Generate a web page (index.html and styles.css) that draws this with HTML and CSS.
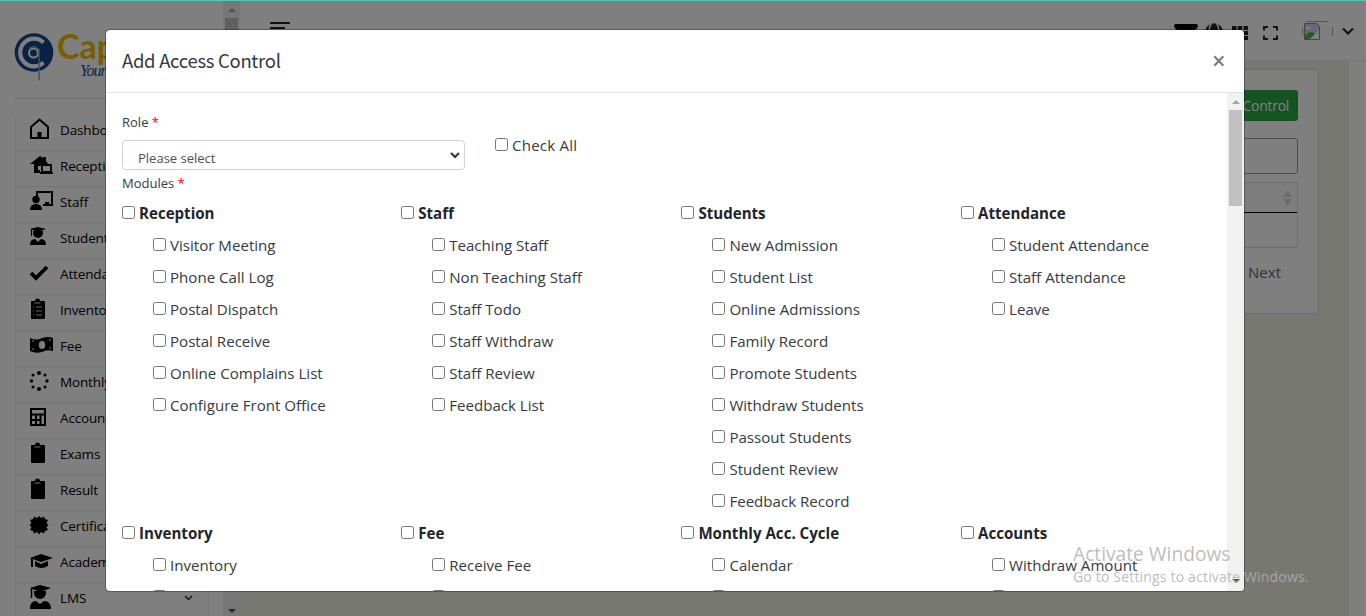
FILE: index.html
```
<!DOCTYPE html>
<html lang="en">
<head>
<meta charset="utf-8">
<title>Add Access Control</title>
<link rel="stylesheet" href="styles.css">
</head>
<body>
<div class="app">
  <aside class="sidebar">
    <div class="side-main">
      <div class="brand">
        <svg class="brand-mark" width="42" height="52" viewBox="0 0 42 52"><circle cx="20" cy="22.500" r="19.300" fill="#17428a"/><path d="M29.500 12.500a13.800 13.800 0 1 0 0 20" fill="none" stroke="#fff" stroke-width="4.200"/><circle cx="19.500" cy="23" r="4.500" fill="none" stroke="#fff" stroke-width="2"/><path d="M15 18.500l5-2 5 3v31" fill="none" stroke="#88a2cc" stroke-width="1.500"/></svg>
        <div class="brand-text"><span class="brand-name">Capital</span><span class="brand-tag">Your School</span></div>
      </div>
      <ul class="menu" id="menu"></ul>
    </div>
    <div class="side-scroll"><i class="tri up"></i><i class="side-thumb"></i><i class="tri down dark"></i></div>
  </aside>
  <div class="main">
    <header class="navbar">
      <div class="burger"><i></i><i class="short"></i><i></i></div>
      <div class="nav-icons">
        <svg width="24" height="18" viewBox="0 0 24 18"><path d="M2 0h20q2 0 2 2 0 2-3 4l-6 5H9L3 6Q0 4 0 2 0 0 2 0z"/></svg>
        <svg width="18" height="18" viewBox="0 0 18 18"><circle cx="9" cy="9" r="8.800" fill="#222"/><path d="M6.500 0q-2.500 4-2.500 9M11.500 0q2.500 4 2.500 9" fill="none" stroke="#fff" stroke-width="1.500"/></svg>
        <svg width="16" height="14" viewBox="0 0 16 14" fill="#222"><path d="M0 0h4.500v4H0zM5.700 0h4.500v4H5.700zM11.500 0H16v4h-4.500zM0 5h4.500v4H0zM5.700 5h4.500v4H5.700zM11.500 5H16v4h-4.500zM0 10h4.500v4H0zM5.700 10h4.500v4H5.700zM11.500 10H16v4h-4.500z"/></svg>
        <svg width="15" height="14" viewBox="0 0 15 14" fill="none" stroke="#222" stroke-width="2"><path d="M1 4.500V1h4M10 1h4v3.500M14 9.500V13h-4M5 13H1V9.500"/></svg>
        <svg class="avatar" width="31" height="20" viewBox="0 0 31 20"><path d="M4 .5h22M.5 6v8M30.500 6v9" stroke="#aaa" fill="none"/><path d="M2.500 2.500h12l3 3v13h-15z" fill="#c5d5f5" stroke="#888"/><path d="M3 18v-3q5-7 10-2l-5 5z" fill="#5ab04a"/><path d="M8 18l9-9v9z" fill="#fff"/><path d="M4 8q1-3 3-2 2 0 2 2z" fill="#fff"/></svg>
        <svg width="12" height="9" viewBox="0 0 12 9"><path d="M1 1.500l5 5 5-5" fill="none" stroke="#222" stroke-width="2.200"/></svg>
      </div>
    </header>
    <div class="content">
      <section class="card">
        <button class="add-btn">Add Access Control</button>
        <div class="search"></div>
        <div class="table"><div class="thead"><svg width="9" height="16" viewBox="0 0 9 16"><path d="M0 7l4.500-7L9 7zM0 9h9l-4.500 7z" fill="#d6d6d6"/></svg></div><div class="trow"></div></div>
        <div class="next">Next</div>
      </section>
    </div>
  </div>
</div>
<div class="backdrop"></div>
<div class="topline"></div>
<div class="modal">
  <div class="modal-head"><h5>Add Access Control</h5><svg width="12" height="12" viewBox="0 0 12 12"><path d="M1.300 1.300l9 9.400M10.300 1.300l-9 9.400" stroke="#808080" stroke-width="2.300"/></svg></div>
  <div class="modal-body">
    <form class="form">
      <div class="top-row">
        <div class="role"><label>Role <b>*</b></label><div class="select"><span>Please select</span><svg width="10" height="7" viewBox="0 0 10 7"><path d="M1 1l4 4 4-4" fill="none" stroke="#343a40" stroke-width="2.200"/></svg></div></div>
        <label class="check all"><input type="checkbox"><span>Check All</span></label>
      </div>
      <label class="modules-label">Modules <b>*</b></label>
      <div class="modules" id="modules"></div>
    </form>
    <div class="scroll"><i class="tri up"></i><i class="thumb"></i><i class="tri down dark"></i></div>
  </div>
</div>
<div class="watermark"><div class="wm-title">Activate Windows</div><div class="wm-sub">Go to Settings to activate Windows.</div></div>
<script src="app.js"></script>
</body>
</html>
```
FILE: styles.css
```
* { box-sizing: border-box; }
body { margin: 0; width: 1366px; height: 616px; overflow: hidden; background: #fff; font-family: "Open Sans", "Noto Sans", sans-serif; color: #212529; }
.app { display: flex; height: 616px; }
.sidebar { display: flex; width: 240px; background: #fff; }
.side-main { width: 223px; padding: 30px 14px 0 15px; overflow: hidden; }
.brand { display: flex; height: 69px; border-bottom: 1px solid #dedede; }
.brand-mark { flex: none; margin-left: -1px; }
.brand-text { display: flex; flex-direction: column; padding-left: 1px; white-space: nowrap; }
.brand-name { font: 700 34px/32px Lato, sans-serif; color: #f2bd00; }
.brand-tag { font: italic 16px/17px "Liberation Serif", serif; color: #1d4f9c; padding-left: 23px; letter-spacing: -1px; }
.menu { list-style: none; margin: 16px 0 0; padding: 0; border: 1px solid #f0f0f0; border-top: 0; }
.menu li { display: flex; align-items: center; height: 36px; border-bottom: 1px solid #e8e8e8; padding: 0 0 5px 14px; font-size: 13.5px; color: #000; letter-spacing: -.15px; }
.menu svg { width: 24px; height: 24px; margin: -2px 6px 0 0; flex: none; overflow: visible; }
.menu .chev { width: 9px; height: 6px; margin: 0 15px 0 auto; }
.side-scroll, .scroll { display: flex; flex-direction: column; align-items: center; width: 17px; background: #f1f1f1; }
.side-thumb { width: 13px; height: 60px; margin-top: 6px; background: #c1c1c1; }
.tri { width: 0; height: 0; border: 4px solid transparent; border-top-width: 0; border-bottom: 4px solid #a3a3a3; }
.side-scroll .up { margin-top: 8px; }
.down { margin: auto 0 3px; transform: rotate(180deg); border-bottom-color: #505050; }
.main { flex: 1; }
.navbar { display: flex; justify-content: space-between; height: 61px; padding: 22px 11px 0 30px; border-bottom: 1px solid #eee; background: #fff; }
.burger { display: flex; flex-direction: column; gap: 3px; }
.burger i { width: 20px; height: 2px; background: #222; }
.burger .short { width: 15px; }
.nav-icons { display: flex; align-items: flex-start; }
.nav-icons svg { margin-top: 1px; }
.nav-icons svg:nth-child(1) { margin-top: 2px; }
.nav-icons svg:nth-child(2) { margin-left: 7px; }
.nav-icons svg:nth-child(3) { margin: 4px 0 0 9px; }
.nav-icons svg:nth-child(4) { margin: 4px 0 0 15px; }
.nav-icons .avatar { margin: -1px 0 0 24px; }
.nav-icons svg:last-child { margin: 5px 1px 0 9px; }
.content { width: 1109px; height: 555px; padding: 8px 30px 0 15px; background: #f0f0e4; }
.card { display: flex; flex-direction: column; height: 245px; padding: 20px 20px 0; border: 1px solid #dcdcdc; border-radius: 4px; background: #fff; }
.add-btn { align-self: flex-end; width: 158px; height: 31px; padding: 0 9px; border: 0; border-radius: 3px; background: #28a745; color: #fff; font: 14px "Open Sans", sans-serif; text-align: right; letter-spacing: -.3px; }
.search { height: 36px; margin-top: 17px; border: 1px solid #999; border-radius: 3px; }
.table { margin-top: 8px; border: 1px solid #dedede; }
.thead { display: flex; height: 30px; justify-content: flex-end; align-items: center; padding-right: 5px; border-bottom: 1px solid #000; background: #fafafa; }
.trow { height: 34px; }
.next { margin-top: 14px; padding-right: 17px; text-align: right; font-size: 15px; line-height: 20px; color: #666; }
.backdrop { position: absolute; inset: 0; background: rgba(0, 0, 0, .5); }
.topline { position: absolute; left: 0; top: 0; width: 1366px; height: 1px; background: #49c5c5; }
.modal { position: absolute; left: 105px; top: 29px; width: 1140px; height: 563px; border: 1px solid rgba(0, 0, 0, .3); border-radius: 5px; background: #fff; background-clip: padding-box; overflow: hidden; }
.modal-head { display: flex; justify-content: space-between; align-items: center; height: 63px; padding: 0 19px 0 16px; border-bottom: 1px solid #dee2e6; }
.modal-head h5 { margin: 0; padding-bottom: 3px; font: 400 18.500px "Noto Sans CJK SC", sans-serif; letter-spacing: -.3px; color: #343a40; }
.modal-body { display: flex; height: 498px; }
.form { flex: 1; padding: 19px 0 0 16px; overflow: hidden; }
.scroll .up { margin-top: 7px; }
.thumb { width: 13px; height: 96px; margin-top: 6px; background: #c1c1c1; }
.scroll .down { margin-bottom: 8px; }
.top-row { display: flex; }
.role { width: 343px; }
.role label, .modules-label { display: block; font-size: 13px; line-height: 20px; color: #343a40; }
.form b { font-weight: 400; color: #f00; }
.select { display: flex; justify-content: space-between; align-items: center; height: 30px; margin-top: 8px; padding: 0 4px 0 15px; border: 1px solid #ced4da; border-radius: 4px; font-size: 13px; color: #495057; }
.select span { padding-top: 5px; }
.modules-label { margin-top: 3px; }
.modules { display: grid; grid-template-columns: repeat(4, 279.700px); grid-auto-rows: 320px; margin-top: 4px; }
.modules > div:nth-child(4n+2) { margin-left: -.5px; }
.check { display: flex; height: 32px; align-items: center; font-size: 15.100px; white-space: nowrap; color: #343a40; }
.check input { width: 13px; height: 13px; margin: -2px 4px 0 0; }
.check.head { font-weight: 700; color: #212529; }
.check.sub { padding-left: 31px; }
.check.all { margin: 17px 0 0 30px; letter-spacing: .2px; }
.watermark { position: absolute; left: 1073px; top: 541px; color: rgba(176, 176, 176, .85); white-space: nowrap; }
.wm-title { font-size: 19.200px; line-height: 26px; }
.wm-sub { font-size: 14px; line-height: 20px; letter-spacing: .18px; }
```
FILE: app.js
```
const clip = '<path d="M4 4h4a2.500 2.500 0 0 1 5 0h4q1 0 1 1v16q0 1-1 1H5q-1 0-1-1z"/><path d="M7.500 6h6" stroke="#ddd"/>';
const icons = {
  home: '<path d="M4 10l8.500-7.500L21 10v11H4z" fill="none" stroke="#000" stroke-width="2"/><path d="M10.500 15h4v6h-4z"/>',
  reception: '<path d="M3 11l10-8 3 2V4h3v4l2 3h-5l-3 2h-2v4h2v3H7v-9z"/><path d="M15 12h9v7h-9z" fill="#fff" stroke="#000" stroke-width="1.800"/><path d="M13 20h13" stroke="#000" stroke-width="2"/>',
  staff: '<path d="M10 7V3h15v13h-9" fill="none" stroke="#000" stroke-width="2"/><circle cx="9" cy="10.500" r="3.700"/><path d="M3 21q0-6 6-6t6 6zM18 13h4v3h-4z"/>',
  student: '<path d="M3 4l8-2 8 2-8 3zM6 6h10v2a5 5 0 0 1-10 0zM3 20q0-6 5-6l3 3 3-3q5 0 5 6z"/><path d="M4.500 4v7" stroke="#000"/>',
  check: '<path d="M4 12l5 5L20 6" fill="none" stroke="#000" stroke-width="3.800"/>',
  list: clip + '<path d="M6 10h1M9 10h6M6 14h1M9 14h6M6 18h1M9 18h6" stroke="#ccc"/>',
  money: '<path d="M3 5q6 3 12 0 6-2 11 0v13q-6-2-11 1-6 2-12-1z"/><ellipse cx="15" cy="12" rx="3.200" ry="4" fill="#fff"/><path d="M5 8h2M22 7h2M5 16h2M22 15h2" stroke="#fff"/>',
  spin: '<circle cx="12" cy="4" r="2"/><circle cx="18" cy="6" r="1.500"/><circle cx="20" cy="12" r="1.700"/><circle cx="18" cy="18" r="1.500"/><circle cx="12" cy="20" r="2"/><circle cx="6" cy="18" r="1.500"/><circle cx="4.500" cy="12" r="1.700"/><circle cx="6" cy="6" r="1.500"/>',
  calc: '<path d="M4 4h14v16H4zM4 9.500h14M4 15h10M9 10v10M13.500 10v10" fill="none" stroke="#000" stroke-width="2"/>',
  clip,
  cert: '<polygon points="12,3 14,5 17,3.500 18,6 21,7 19.500,10 21.500,12 19.500,14 21,17 18,18 17,20.500 14,19 12,21.500 10,19 7,20.500 6,18 3,17 4.500,14 2.500,12 4.500,10 3,7 6,6 7,3.500 10,5"/>',
  cap: '<path d="M3 9l11-4 12 4-12 4zM8 12l6 3 7-3v5q-7 4-13 0z"/><path d="M5 9v9" stroke="#000" stroke-width="2"/>',
  lms: '<path d="M3 3l10-3 11 3-11 4zM7 6h12v2a6 6 0 0 1-12 0zM3 24q0-8 6-8l4 3 4-3q7 0 7 8z"/><path d="M4.500 3v10" stroke="#000" stroke-width="1.500"/>'
};
const menu = [["home", "Dashboard"], ["reception", "Reception"], ["staff", "Staff"], ["student", "Students"], ["check", "Attendance"], ["list", "Inventory"], ["money", "Fee"], ["spin", "Monthly Acc. Cycle"], ["calc", "Accounts"], ["clip", "Exams"], ["clip", "Result"], ["cert", "Certificates"], ["cap", "Academics"], ["lms", "LMS"]];
document.getElementById("menu").innerHTML = menu.map(([i, t]) =>
  `<li><svg viewBox="3 0 24 24">${icons[i]}</svg><span>${t}</span>${t === "LMS" ? '<svg class="chev" viewBox="0 0 9 6"><path d="M1 1l3.500 3.500L8 1" fill="none" stroke="#222" stroke-width="1.300"/></svg>' : ""}</li>`).join("");
const modules = [
  ["Reception", "Visitor Meeting", "Phone Call Log", "Postal Dispatch", "Postal Receive", "Online Complains List", "Configure Front Office"],
  ["Staff", "Teaching Staff", "Non Teaching Staff", "Staff Todo", "Staff Withdraw", "Staff Review", "Feedback List"],
  ["Students", "New Admission", "Student List", "Online Admissions", "Family Record", "Promote Students", "Withdraw Students", "Passout Students", "Student Review", "Feedback Record"],
  ["Attendance", "Student Attendance", "Staff Attendance", "Leave"],
  ["Inventory", "Inventory", ""],
  ["Fee", "Receive Fee", ""],
  ["Monthly Acc. Cycle", "Calendar", ""],
  ["Accounts", "Withdraw Amount", ""]
];
document.getElementById("modules").innerHTML = modules.map(m =>
  `<div>${m.map((t, i) => `<label class="check ${i ? "sub" : "head"}"><input type="checkbox"><span>${t}</span></label>`).join("")}</div>`).join("");
```
